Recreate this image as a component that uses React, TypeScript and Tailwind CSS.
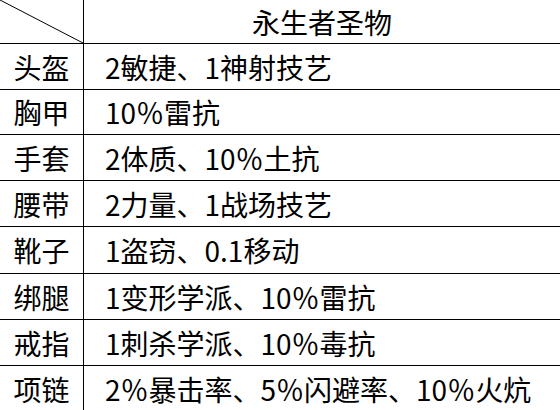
import React from 'react';

const rows: { slot: string; bonus: string; h: string }[] = [
  { slot: '头盔', bonus: '2敏捷、1神射技艺', h: 'h-[46px]' },
  { slot: '胸甲', bonus: '10％雷抗', h: 'h-[45px]' },
  { slot: '手套', bonus: '2体质、10％土抗', h: 'h-[46px]' },
  { slot: '腰带', bonus: '2力量、1战场技艺', h: 'h-[46px]' },
  { slot: '靴子', bonus: '1盗窃、0.1移动', h: 'h-[47px]' },
  { slot: '绑腿', bonus: '1变形学派、10％雷抗', h: 'h-[46px]' },
  { slot: '戒指', bonus: '1刺杀学派、10％毒抗', h: 'h-[46px]' },
  { slot: '项链', bonus: '2％暴击率、5％闪避率、10％火炕', h: 'h-[46px]' },
];

const App: React.FC = () => {
  return (
    <div
      className="w-[560px] h-[410px] overflow-hidden bg-white text-black text-[28px] leading-none"
      style={{ fontFamily: '"Noto Sans CJK SC", "Noto Sans", sans-serif' }}
    >
      <div className="grid grid-cols-[84px_1fr]">
        {/* header: split cell + title */}
        <div className="relative h-[44px] border-r border-b border-black">
          <svg className="absolute inset-0" width="83" height="43" viewBox="0 0 83 43">
            <line x1="0" y1="0" x2="83" y2="43" stroke="#000" strokeWidth="1" />
          </svg>
        </div>
        <div className="h-[44px] border-b border-black flex items-center justify-center">
          永生者圣物
        </div>

        {rows.map((r) => (
          <React.Fragment key={r.slot}>
            <div className={`${r.h} border-r border-b border-black flex items-center justify-center`}>
              {r.slot}
            </div>
            <div className={`${r.h} border-b border-black flex items-center pl-[21px] whitespace-nowrap`}>
              {r.bonus}
            </div>
          </React.Fragment>
        ))}
      </div>
    </div>
  );
};

export default App;
